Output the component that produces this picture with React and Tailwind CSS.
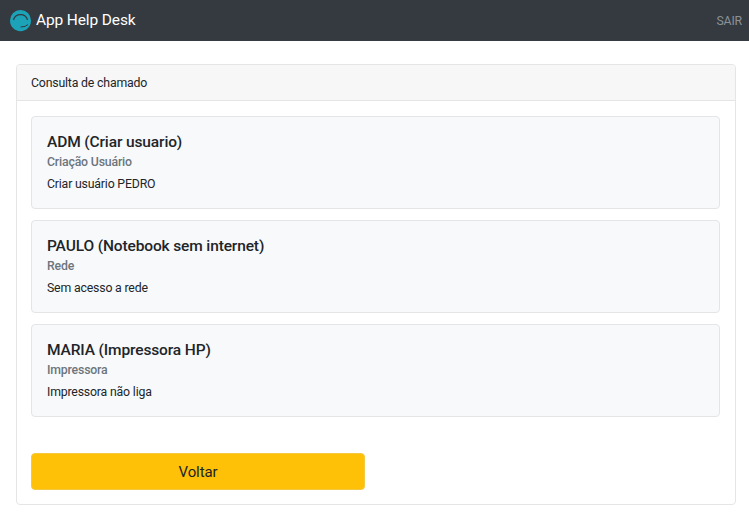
function Item({ title, sub, text }) {
  return (
    <div className="bg-[#f8f9fa] border border-[#e4e5e7] rounded-[4px] h-[92.6px] pl-[15px] pt-[15px] mb-[11.4px]">
      <div className="text-[15.5px] leading-[20px] tracking-[-0.13px] font-medium text-[#212529]">{title}</div>
      <div className="text-[12.3px] leading-[15px] tracking-[-0.18px] mt-[3.4px] font-medium text-[#6c757d]">{sub}</div>
      <div className="text-[12.3px] leading-[15px] tracking-[-0.18px] mt-[7px] text-[#212529]">{text}</div>
    </div>
  );
}
export default function App() {
  return (
    <div className="w-[749px] h-[520px] bg-white overflow-hidden font-['Roboto',sans-serif]">
      <nav className="h-[41px] bg-[#343a40] flex items-center justify-between pl-[9px] pr-[7px]">
        <div className="flex items-center gap-[4px]">
          <svg width="23" height="23" viewBox="0 0 23 23">
            <path d="M1 11.5 A10.5 10.5 0 0 1 22 11.5 Q22 16 19 19 A10.5 10.5 0 0 1 4 19 Q1 16 1 11.5Z" fill="#1ca3b8" />
            <path d="M4.5 11 A7.2 7 0 0 1 18.5 11" fill="none" stroke="#343a40" strokeWidth="1.2" />
            <path d="M19 15.5 Q17 18 11.5 18" fill="none" stroke="#343a40" strokeWidth="1" />
          </svg>
          <span className="mt-[1px] text-[15.5px] tracking-[-0.13px] text-white">App Help Desk</span>
        </div>
        <span className="mt-[1px] text-[12.3px] tracking-[-0.18px] text-[#8c9196]">SAIR</span>
      </nav>
      <div className="ml-[16px] mt-[23px] w-[720px] h-[441px] border border-[#e5e5e5] rounded-[4px] flex flex-col">
        <div className="h-[36px] pt-[2px] bg-[#f7f7f7] border-b border-[#e5e5e5] rounded-t-[4px] flex items-center pl-[14px] text-[12.3px] tracking-[-0.18px] text-[#212529]">
          Consulta de chamado
        </div>
        <div className="pl-[14px] pr-[15px] pt-[15px] flex-1">
          <Item title="ADM (Criar usuario)" sub="Criação Usuário" text="Criar usuário PEDRO" />
          <Item title="PAULO (Notebook sem internet)" sub="Rede" text="Sem acesso a rede" />
          <Item title="MARIA (Impressora HP)" sub="Impressora" text="Impressora não liga" />
          <button className="mt-[36px] w-[334px] h-[37px] pt-[3px] bg-[#ffc107] border border-[#f5c842] rounded-[4px] text-[15px] tracking-[-0.1px] text-[#212529] flex items-center justify-center">Voltar</button>
        </div>
      </div>
    </div>
  );
}
